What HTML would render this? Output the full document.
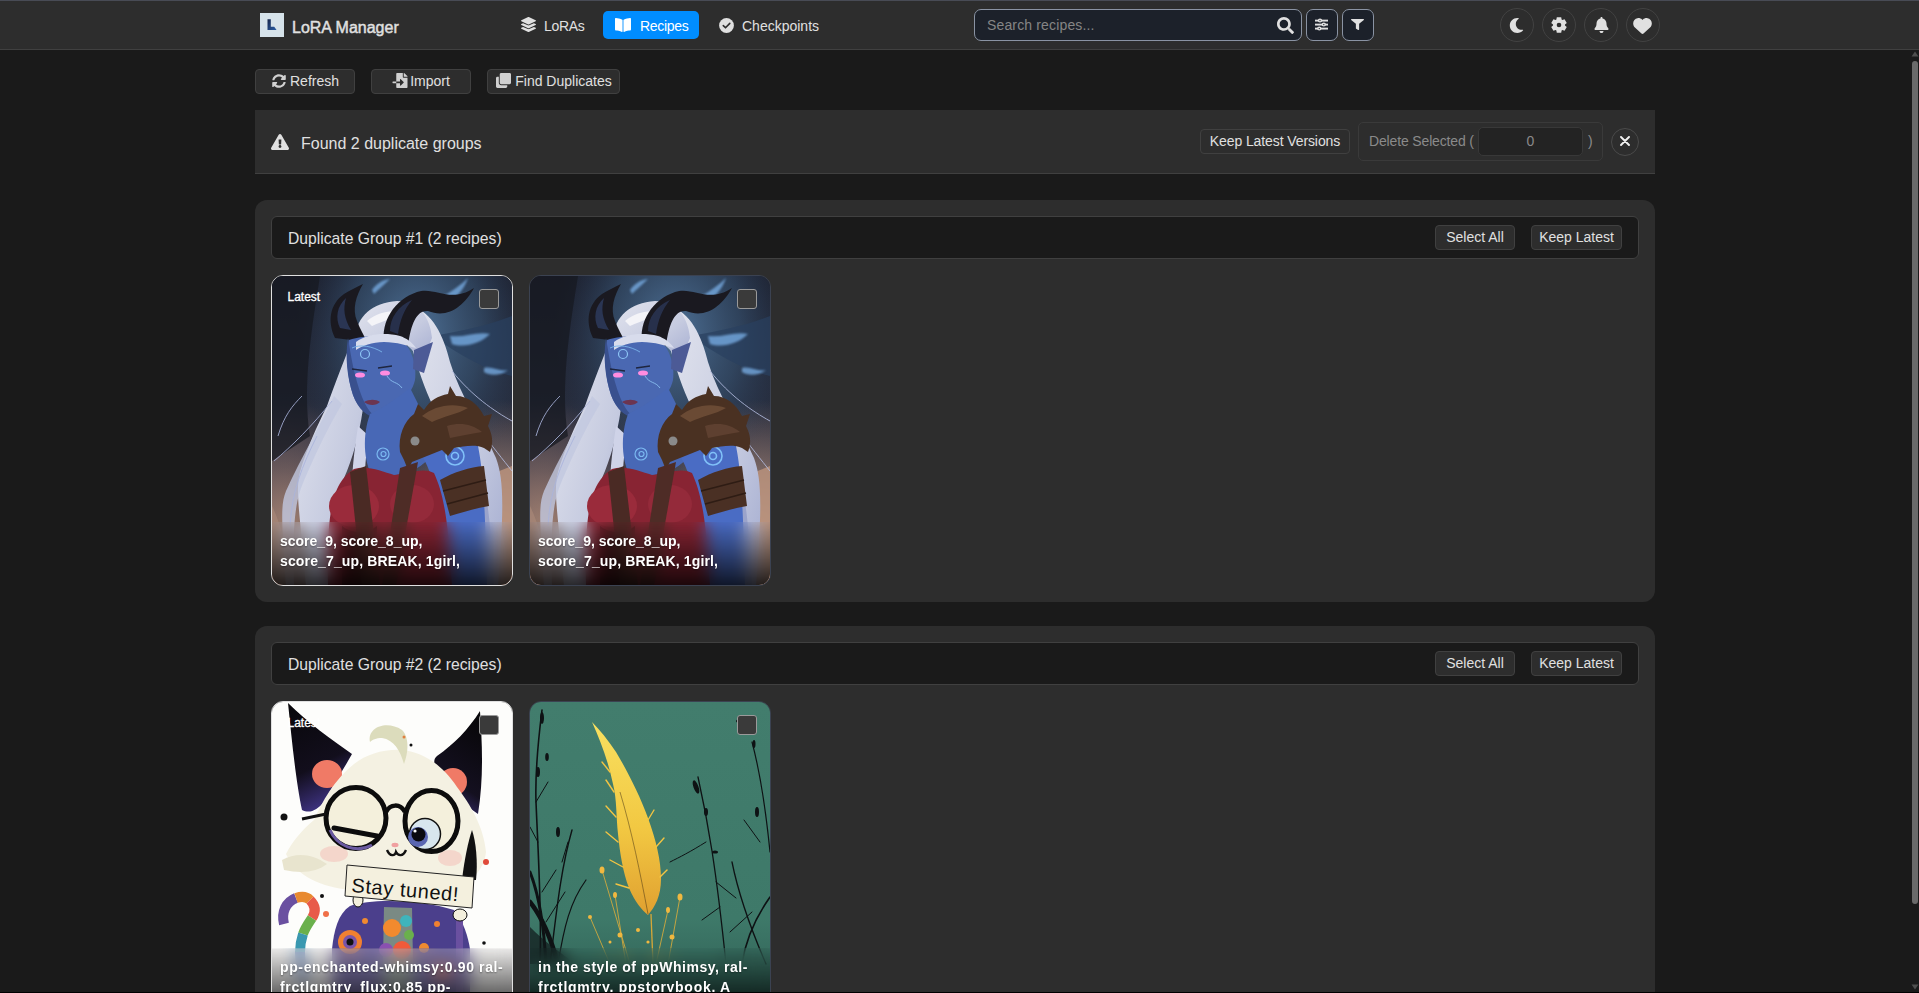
<!DOCTYPE html>
<html><head><meta charset="utf-8">
<style>
*{box-sizing:border-box;margin:0;padding:0}
html,body{width:1919px;height:993px;overflow:hidden;background:#1a1a1a;font-family:"Liberation Sans",sans-serif;color:#e0e0e0}
.abs{position:absolute}
#topline{left:0;top:0;width:1919px;height:1px;background:#484b55}
#header{left:0;top:0;width:1919px;height:50px;background:#2d2d2d;border-bottom:1px solid #404040}
.logo{left:260px;top:13px;width:24px;height:24px;background:#d6e2ea}
.brand{left:292px;top:19px;font-size:16px;font-weight:normal;-webkit-text-stroke:0.45px #e0e0e0;white-space:nowrap;color:#e0e0e0}
.nav{font-size:14px;white-space:nowrap;color:#e0e0e0}
.navbtn{left:603px;top:11px;width:96px;height:28px;border-radius:5px;background:oklch(68% 0.28 256)}
.search{left:974px;top:9px;width:328px;height:32px;border:1px solid #8a93a3;border-radius:7px;background:#1c212a}
.sbtn{top:9px;width:32px;height:32px;border:1px solid #8a93a3;border-radius:7px;background:#1c212a}
.circ{top:8px;width:34px;height:34px;border:1px solid #424242;border-radius:50%}
.btn{height:25px;padding-bottom:2px;border:1px solid #404040;border-radius:4px;background:#2d2d2d;font-size:14px;display:flex;align-items:center;justify-content:center;white-space:nowrap;color:#e0e0e0}
#banner{left:255px;top:110px;width:1400px;height:64px;background:#2d2d2d;border-bottom:1px solid #404040}
.group{left:255px;width:1400px;background:#2d2d2d;border-radius:12px}
.ghead{left:16px;top:16px;width:1368px;height:43px;background:#1a1a1a;border:1px solid #404040;border-radius:6px}
.gtitle{left:16px;top:13px;font-size:15.7px;white-space:nowrap}
.card{width:242px;height:311px;border-radius:12px;overflow:hidden;border:1px solid #3c4250}
.card svg{position:absolute;left:0;top:0}
.cb{left:207px;top:13px;width:20px;height:20px;border:1.5px solid #9a9a9a;border-radius:3px;background:#3a3a3a}
.foot{left:0;top:246px;width:240px;height:64px;padding:9px 8px 0 8px;font-size:14px;font-weight:bold;line-height:20px;color:#fff;overflow:hidden;backdrop-filter:blur(8px);-webkit-backdrop-filter:blur(8px);background:linear-gradient(rgba(0,0,0,0.02),rgba(0,0,0,0.8))}
.ftxt{white-space:nowrap;text-shadow:0 1px 2px rgba(0,0,0,0.4)}
.latest{left:15.5px;top:14px;font-size:12px;color:#fff;-webkit-text-stroke:0.3px #fff;white-space:nowrap}
#sbthumb{left:1912px;top:61px;width:6px;height:843px;background:#6a6a6a;border-radius:3px}
</style></head>
<body>
<div class="abs" id="header">
  <div class="abs" id="topline"></div>
  <div class="abs logo"><svg width="24" height="24" viewBox="0 0 24 24" style="position:absolute;left:0;top:0"><defs><linearGradient id="lg" x1="0" y1="0" x2="1" y2="1"><stop offset="0" stop-color="#16244a"/><stop offset="1" stop-color="#2b5fa8"/></linearGradient></defs><path d="M7.5 6.2 H10.8 V13.7 H14.2 L16.6 17 H7.5 Z" fill="url(#lg)"/></svg></div>
  <div class="abs brand">LoRA Manager</div>
  <svg class="abs" style="left:521px;top:17px" width="15" height="15" viewBox="0 0 512 512"><path fill="#e0e0e0" d="M12.41 148.02l232.94 105.67c6.8 3.09 14.49 3.09 21.29 0l232.94-105.67c16.55-7.51 16.55-32.52 0-40.03L266.65 2.31a25.607 25.607 0 0 0-21.29 0L12.41 107.98c-16.55 7.51-16.55 32.53 0 40.04zm487.18 88.28l-58.09-26.33-161.64 73.27c-7.56 3.43-15.59 5.17-23.86 5.17s-16.29-1.74-23.86-5.17L70.51 209.97l-58.1 26.33c-16.55 7.5-16.55 32.5 0 40l232.94 105.59c6.8 3.08 14.49 3.08 21.29 0L499.59 276.3c16.55-7.5 16.55-32.5 0-40zm0 127.8l-57.87-26.23-161.86 73.37c-7.56 3.43-15.59 5.17-23.86 5.17s-16.29-1.74-23.86-5.17L70.29 337.87 12.41 364.1c-16.55 7.5-16.55 32.5 0 40l232.94 105.59c6.8 3.08 14.49 3.08 21.29 0L499.59 404.1c16.55-7.5 16.55-32.5 0-40z"/></svg>
  <div class="abs nav" style="left:544px;top:18px;letter-spacing:-0.3px">LoRAs</div>
  <div class="abs navbtn"></div>
  <svg class="abs" style="left:615px;top:17.5px" width="16" height="14" viewBox="0 30 576 452" preserveAspectRatio="none"><path fill="#fff" d="M542.22 32.05c-54.8 3.11-163.72 14.43-230.96 55.59-4.64 2.84-7.27 7.89-7.27 13.17v363.87c0 11.55 12.63 18.85 23.28 13.49 69.18-34.82 169.23-44.32 218.7-46.92 16.89-.89 30.02-14.43 30.02-30.66V62.75c.01-17.71-15.35-31.74-33.77-30.7zM264.73 87.64C197.5 46.48 88.58 35.17 33.78 32.05 15.36 31.01 0 45.04 0 62.75V400.6c0 16.24 13.13 29.78 30.02 30.66 49.49 2.6 149.59 12.11 218.77 46.95 10.62 5.35 23.21-1.94 23.21-13.46V100.63c0-5.29-2.62-10.14-7.27-12.99z"/></svg>
  <div class="abs nav" style="left:640px;top:18px;color:#fff;letter-spacing:-0.3px">Recipes</div>
  <svg class="abs" style="left:719px;top:17.5px" width="15" height="15" viewBox="0 0 15 15"><circle cx="7.5" cy="7.5" r="7.4" fill="#e0e0e0"/><path d="M4.3 7.6 L6.5 9.8 L10.8 5.4" fill="none" stroke="#2d2d2d" stroke-width="1.6" stroke-linecap="round" stroke-linejoin="round"/></svg>
  <div class="abs nav" style="left:742px;top:18px">Checkpoints</div>
  <div class="abs search"></div>
  <div class="abs" style="left:987px;top:17px;font-size:14px;color:#858585;letter-spacing:0.15px">Search recipes...</div>
  <svg class="abs" style="left:1277px;top:17px" width="17" height="17" viewBox="0 0 512 512"><path d="M505 442.7L405.3 343c-4.5-4.5-10.6-7-17-7H372c27.6-35.3 44-79.7 44-128C416 93.1 322.9 0 208 0S0 93.1 0 208s93.1 208 208 208c48.3 0 92.7-16.4 128-44v16.3c0 6.4 2.5 12.5 7 17l99.7 99.7c9.4 9.4 24.6 9.4 33.9 0l28.3-28.3c9.4-9.4 9.4-24.6.1-34zM208 336c-70.7 0-128-57.2-128-128 0-70.7 57.2-128 128-128 70.7 0 128 57.2 128 128 0 70.7-57.2 128-128 128z" fill="#e0e0e0"/></svg>
  <div class="abs sbtn" style="left:1306px"></div>
  <svg class="abs" style="left:1315px;top:18px" width="13" height="13" viewBox="0 0 13 13"><g stroke="#e0e0e0" stroke-width="1.9"><line x1="0" y1="2.6" x2="13" y2="2.6"/><line x1="0" y1="6.6" x2="13" y2="6.6"/><line x1="0" y1="10.6" x2="13" y2="10.6"/></g><g fill="#e0e0e0"><ellipse cx="5" cy="2.6" rx="2.2" ry="2"/><ellipse cx="8.8" cy="6.6" rx="2.2" ry="2"/><ellipse cx="4.3" cy="10.6" rx="2.2" ry="2"/></g><g fill="#1c212a"><circle cx="5" cy="2.6" r="0.7"/><circle cx="8.8" cy="6.6" r="0.7"/><circle cx="4.3" cy="10.6" r="0.7"/></g></svg>
  <div class="abs sbtn" style="left:1342px"></div>
  <svg class="abs" style="left:1351px;top:19px" width="13" height="11" viewBox="0 0 512 512" preserveAspectRatio="none"><path fill="#e0e0e0" d="M487.976 0H24.028C2.71 0-8.047 25.866 7.058 40.971L192 225.941V432c0 7.831 3.821 15.17 10.237 19.662l80 55.98C298.02 518.69 320 507.493 320 487.98V225.941l184.947-184.97C520.021 25.896 509.338 0 487.976 0z"/></svg>
  <div class="abs circ" style="left:1500px"></div>
  <svg class="abs" style="left:1508.7px;top:17.5px" width="15" height="15" viewBox="0 0 512 512"><path d="M283.211 512c78.962 0 151.079-35.925 198.857-94.792 7.068-8.708-.639-21.43-11.562-19.35-124.203 23.654-238.262-71.576-238.262-196.954 0-72.222 38.662-138.635 101.498-174.394 9.686-5.512 7.25-20.197-3.756-22.23A258.156 258.156 0 0 0 283.211 0c-141.309 0-256 114.511-256 256 0 141.309 114.511 256 256 256z" fill="#e0e0e0"/></svg>
  <div class="abs circ" style="left:1542px"></div>
  <svg class="abs" style="left:1551px;top:17px" width="16" height="16" viewBox="0 0 16 16"><path fill-rule="evenodd" d="M13.98 8.44 L15.76 9.93 L13.55 13.76 L11.37 12.96 L10.61 13.40 L10.21 15.69 L5.79 15.69 L5.39 13.40 L4.63 12.96 L2.45 13.76 L0.24 9.93 L2.02 8.44 L2.02 7.56 L0.24 6.07 L2.45 2.24 L4.63 3.04 L5.39 2.60 L5.79 0.31 L10.21 0.31 L10.61 2.60 L11.37 3.04 L13.55 2.24 L15.76 6.07 L13.98 7.56Z M8 5.6 A2.4 2.4 0 1 0 8 10.4 A2.4 2.4 0 1 0 8 5.6Z" fill="#e0e0e0"/><circle cx="8" cy="8" r="5" fill="#e0e0e0"/><circle cx="8" cy="8" r="2.3" fill="#2d2d2d"/></svg>
  <div class="abs circ" style="left:1584px"></div>
  <svg class="abs" style="left:1593.5px;top:17px" width="15" height="16" viewBox="0 0 448 512"><path d="M224 0c-17.7 0-32 14.3-32 32V51.2C119 66 64 130.6 64 208v18.8c0 47-17.3 92.4-48.5 127.6l-7.4 8.3c-8.4 9.4-10.4 22.9-5.3 34.4S19.4 416 32 416H416c12.6 0 24-7.4 29.2-18.9s3.1-25-5.3-34.4l-7.4-8.3C401.3 319.2 384 273.9 384 226.8V208c0-77.4-55-142-128-156.8V32c0-17.7-14.3-32-32-32zm45.3 493.3c12-12 18.7-28.3 18.7-45.3H224 160c0 17 6.7 33.3 18.7 45.3s28.3 18.7 45.3 18.7s33.3-6.7 45.3-18.7z" fill="#e0e0e0"/></svg>
  <div class="abs circ" style="left:1626px"></div>
  <svg class="abs" style="left:1633px;top:17.5px" width="19" height="16" viewBox="0 0 512 440"><path d="M47.6 268.4L228.3 437.1c7.5 7 17.4 10.9 27.7 10.9s20.2-3.9 27.7-10.9L464.4 268.4c30.4-28.3 47.6-68 47.6-109.5v-5.8c0-69.9-50.5-129.5-119.4-141C347 4.5 300.6 19.4 268 52L256 64 244 52c-32.6-32.6-79-47.5-124.6-39.9C50.5 23.6 0 83.2 0 153.1v5.8c0 41.5 17.2 81.2 47.6 109.5z" fill="#e0e0e0" transform="translate(0,-8)"/></svg>
</div>

<div class="abs btn" style="left:255px;top:69px;width:100px;padding-left:2px"><svg width="14" height="14" viewBox="0 0 512 512" style="margin-right:4px;margin-left:-1px"><path fill="#d0d0d0" d="M370.72 133.28C339.458 104.008 298.888 87.962 255.848 88c-77.458.068-144.328 53.178-162.791 126.85-1.344 5.363-6.122 9.15-11.651 9.15H24.103c-7.498 0-13.194-6.807-11.807-14.176C33.933 94.924 134.813 8 256 8c66.448 0 126.791 26.136 171.315 68.685L463.03 40.97C478.149 25.851 504 36.559 504 57.941V192c0 13.255-10.745 24-24 24H345.941c-21.382 0-32.090-25.851-16.971-40.971l41.750-41.749zM32 296h134.059c21.382 0 32.090 25.851 16.971 40.971l-41.75 41.75c31.262 29.273 71.835 45.319 114.876 45.280 77.418-.07 144.315-53.144 162.787-126.849 1.344-5.363 6.122-9.15 11.651-9.15h57.304c7.498 0 13.194 6.807 11.807 14.176C478.067 417.076 377.187 504 256 504c-66.448 0-126.791-26.136-171.315-68.685L48.970 471.030C33.851 486.149 8 475.441 8 454.059V320c0-13.255 10.745-24 24-24z"/></svg>Refresh</div>
<div class="abs btn" style="left:371px;top:69px;width:100px;padding-left:0px"><svg width="16" height="15" viewBox="0 0 512 512" style="margin-right:2px"><path fill="#d0d0d0" d="M16 288c-8.8 0-16 7.2-16 16v32c0 8.8 7.2 16 16 16h112v-64zm489-183L407.1 7c-4.500-4.500-10.600-7-17-7H384v128h128v-6.1c0-6.3-2.5-12.4-7-16.9zm-153 31V0H152c-13.3 0-24 10.7-24 24v264h128v-65.2c0-14.3 17.3-21.4 27.4-11.3L379 308c6.6 6.7 6.6 17.4 0 24l-95.7 96.4c-10.1 10.1-27.4 3-27.4-11.3V352H128v136c0 13.3 10.7 24 24 24h336c13.3 0 24-10.7 24-24V160H376c-13.2 0-24-10.8-24-24z"/></svg>Import</div>
<div class="abs btn" style="left:487px;top:69px;width:133px;padding-left:1px"><svg width="15" height="15" viewBox="0 0 512 512" style="margin-right:4px"><path fill="#d0d0d0" d="M464 0c26.51 0 48 21.49 48 48v288c0 26.51-21.49 48-48 48H176c-26.51 0-48-21.49-48-48V48c0-26.51 21.49-48 48-48h288M176 416c-44.112 0-80-35.888-80-80V128H48c-26.51 0-48 21.49-48 48v288c0 26.51 21.490 48 48 48h288c26.51 0 48-21.49 48-48v-48H176z"/></svg>Find Duplicates</div>

<div class="abs" id="banner">
  <svg class="abs" style="left:15.5px;top:24px" width="18" height="16" viewBox="0 0 576 512"><path fill="#e0e0e0" d="M569.517 440.013C587.975 472.007 564.806 512 527.94 512H48.054c-36.937 0-59.999-40.055-41.577-71.987L246.423 23.985c18.467-32.009 64.72-31.951 83.154 0l239.94 416.028zM288 354c-25.405 0-46 20.595-46 46s20.595 46 46 46 46-20.595 46-46-20.595-46-46-46zm-43.673-165.346l7.418 136c.347 6.364 5.609 11.346 11.982 11.346h48.546c6.373 0 11.635-4.982 11.982-11.346l7.418-136c.375-6.874-5.098-12.654-11.982-12.654h-63.383c-6.884 0-12.356 5.780-11.981 12.654z"/></svg>
  <div class="abs" style="left:46px;top:25px;font-size:16px;white-space:nowrap">Found 2 duplicate groups</div>
  <div class="abs btn" style="left:945px;top:19px;width:150px;letter-spacing:-0.1px">Keep Latest Versions</div>
  <div class="abs" style="left:1103px;top:12px;width:245px;height:39px;border:1px solid #3a3a3a;border-radius:5px;opacity:1">
    <div class="abs" style="left:10px;top:10px;font-size:14px;color:#8a8a8a;white-space:nowrap;letter-spacing:-0.15px">Delete Selected (</div>
    <div class="abs" style="left:119px;top:4px;width:105px;height:29px;background:#232323;border:1px solid #383838;border-radius:5px;font-size:14px;color:#8a8a8a;text-align:center;line-height:26px">0</div>
    <div class="abs" style="left:229px;top:10px;font-size:14px;color:#8a8a8a">)</div>
  </div>
  <div class="abs" style="left:1356px;top:18px;width:28px;height:28px;border:1px solid #4a4a4a;border-radius:50%"></div>
  <svg class="abs" style="left:1365px;top:25.5px" width="10" height="10" viewBox="0 0 10 10"><path d="M1 1 L9 9 M9 1 L1 9" stroke="#f0f0f0" stroke-width="1.9" stroke-linecap="round"/></svg>
</div>

<div class="abs group" style="top:200px;height:402px">
  <div class="abs ghead"><div class="abs gtitle">Duplicate Group #1 (2 recipes)</div>
    <div class="abs btn" style="left:1163px;top:8px;width:80px">Select All</div>
    <div class="abs btn" style="left:1259px;top:8px;width:91px">Keep Latest</div>
  </div>
  <!--G1--><div class="abs card" style="left:16px;top:75px;border-color:#e0e0e0"><svg width="240" height="310" viewBox="0 0 240 310" style="position:absolute;left:0;top:0">
<defs>
<linearGradient id="adbg" x1="0" y1="0" x2="0" y2="1"><stop offset="0" stop-color="#1c1f2c"/><stop offset="0.4" stop-color="#262c3c"/><stop offset="0.62" stop-color="#43404c"/><stop offset="0.8" stop-color="#7a6464"/><stop offset="1" stop-color="#a8887a"/></linearGradient>
<radialGradient id="adglow" cx="0.6" cy="0.18" r="0.5"><stop offset="0" stop-color="#4f7298" stop-opacity="1"/><stop offset="0.55" stop-color="#36506e" stop-opacity="0.7"/><stop offset="1" stop-color="#2a3a55" stop-opacity="0"/></radialGradient>
<radialGradient id="adbr" cx="0.95" cy="0.85" r="0.45"><stop offset="0" stop-color="#c8a088" stop-opacity="0.95"/><stop offset="1" stop-color="#9a7a6c" stop-opacity="0"/></radialGradient>
<radialGradient id="adbl" cx="0.05" cy="0.8" r="0.4"><stop offset="0" stop-color="#a08070" stop-opacity="0.9"/><stop offset="1" stop-color="#7a6060" stop-opacity="0"/></radialGradient>
<linearGradient id="adhair" x1="0" y1="0" x2="1" y2="1"><stop offset="0" stop-color="#e2e4ee"/><stop offset="0.6" stop-color="#c6cbe0"/><stop offset="1" stop-color="#a4acd0"/></linearGradient>
<filter id="adsoft"><feGaussianBlur stdDeviation="1.2"/></filter>
</defs>
<rect width="240" height="310" fill="url(#adbg)"/>
<rect width="240" height="310" fill="url(#adglow)"/>
<rect width="240" height="310" fill="url(#adbr)"/>
<rect width="240" height="310" fill="url(#adbl)"/>
<path d="M0 0 H48 C40 50 30 110 38 160 L0 185 Z" fill="#171922" opacity="0.75"/>
<path d="M160 60 C190 80 215 95 240 100 V40 C215 50 190 55 160 60 Z" fill="#2a4060" opacity="0.7"/>
<g fill="#7ab0e8" opacity="0.75" filter="url(#adsoft)">
<path d="M172 20 C180 15 190 8 196 2 C192 14 184 22 176 26 Z"/>
<path d="M178 60 C192 62 205 55 218 58 C208 68 192 72 180 68 Z"/>
<path d="M100 14 C104 8 110 4 118 3 C112 9 106 14 102 18 Z"/>
<path d="M212 92 C220 90 228 96 236 94 C228 100 218 100 212 96 Z"/>
</g>
<path d="M215 200 C225 230 232 260 240 310 V190 Z" fill="#b8927c" opacity="0.85"/>
<path d="M0 230 C10 250 16 280 20 310 H0 Z" fill="#a88878" opacity="0.7"/>
<!-- left hair -->
<path d="M80 64 C70 90 62 110 55 130 C45 150 35 172 28 196 C23 216 28 236 34 310 L60 310 C60 235 66 215 75 195 C83 175 89 150 92 125 C93 100 89 80 85 66 Z" fill="url(#adhair)"/>
<path d="M62 120 C48 150 30 180 14 215 C8 230 10 245 14 310 L22 310 C20 240 24 222 34 200 C46 172 58 148 70 128 Z" fill="#c2c8e0" opacity="0.8"/>
<path d="M86 150 C80 190 76 222 84 310 L96 310 C90 222 92 188 97 160 Z" fill="#cfd3e8"/>
<g stroke="#aab4dc" stroke-width="1" fill="none" opacity="0.85"><path d="M60 125 C40 150 20 170 2 185"/><path d="M45 160 C30 190 20 215 18 250"/><path d="M30 120 C20 130 12 140 6 160"/></g>
<!-- right hair -->
<path d="M140 30 C160 36 172 60 178 86 C188 120 210 150 224 182 C232 204 232 232 226 310 L210 310 C212 228 204 198 190 172 L162 132 C152 112 146 92 140 72 Z" fill="url(#adhair)"/>
<path d="M196 160 C210 190 218 220 222 310 L214 310 C212 225 206 195 190 170 Z" fill="#8e98c4" opacity="0.7"/>
<g stroke="#b4bde0" stroke-width="1" fill="none" opacity="0.85"><path d="M180 95 C200 120 222 135 240 145"/><path d="M205 150 C220 170 232 185 240 195"/></g>
<!-- top hair -->
<path d="M83 62 C85 40 100 27 125 25 C146 25 158 40 160 62 L150 86 C140 72 130 63 118 61 C105 61 92 67 83 72 Z" fill="url(#adhair)"/>
<path d="M95 45 C105 36 120 33 135 36 C125 42 112 44 100 50 Z" fill="#f4f4f8"/>
<!-- horns -->
<path d="M63 62 C55 45 58 28 72 18 C78 14 85 11 91 8 C84 20 80 33 85 45 C88 53 92 59 95 66 Z" fill="#1a1920"/>
<path d="M112 68 C109 45 122 24 145 16 C163 10 178 28 202 12 C192 30 176 43 156 35 C145 34 139 47 136 70 Z" fill="#1a1920"/>
<path d="M68 52 C63 42 65 30 74 22 C71 33 72 42 79 54 Z" fill="#2e3c60" opacity="0.8"/>
<path d="M118 55 C118 42 126 30 140 24 C132 34 128 44 126 58 Z" fill="#2a3656" opacity="0.8"/>
<!-- face -->
<path d="M77 64 C90 60 110 58 126 62 C139 69 145 88 143 104 C139 121 124 134 104 140 C94 139 86 132 81 119 C75 101 74 82 77 64 Z" fill="#4a68b2"/>
<path d="M76 62 C79 80 82 100 90 121 C95 133 100 139 106 142 C95 141 86 133 81 119 C75 101 73 80 76 62 Z" fill="#39508e"/>
<path d="M142 74 L161 66 L152 97 L141 93 Z" fill="#4c5a96"/>
<path d="M84 66 C95 58 112 56 128 60 C134 62 140 66 144 72 C136 70 125 66 112 66 C100 66 90 70 84 74 Z" fill="#d8dcec"/>
<circle cx="93" cy="78" r="4.5" fill="none" stroke="#8cc4f4" stroke-width="1.2"/>
<path d="M80 72 C88 68 100 70 110 76" stroke="#7ab4ea" stroke-width="0.9" fill="none"/>
<ellipse cx="88" cy="99" rx="5" ry="2.6" fill="#ff8ce0"/>
<ellipse cx="113" cy="97" rx="5" ry="2.6" fill="#ff8ce0"/>
<path d="M80 93 L95 95 M106 92 L120 90" stroke="#1e2640" stroke-width="1.3"/>
<path d="M92 126 C97 123 104 123 108 126 C104 130 97 130 92 126 Z" fill="#6c3550"/>
<path d="M115 100 C120 108 125 105 130 112" stroke="#8ac0f0" stroke-width="0.9" fill="none"/>
<!-- neck/chest -->
<path d="M98 138 C112 132 125 122 138 112 C150 135 162 160 160 178 C150 195 125 202 100 200 C92 185 90 160 98 138 Z" fill="#4868b6"/>
<path d="M105 178 a6 6 0 1 0 12 0 a6 6 0 1 0 -12 0 M109 178 a2.5 2.5 0 1 0 5 0 a2.5 2.5 0 1 0 -5 0" fill="none" stroke="#7ab8f0" stroke-width="1.2"/>
<!-- right arm -->
<path d="M153 162 C172 155 195 158 206 170 C211 195 213 225 215 310 L176 310 C170 230 162 200 150 180 Z" fill="#4a6cc4"/>
<circle cx="183" cy="180" r="9" fill="none" stroke="#80c0f8" stroke-width="1.6"/>
<circle cx="183" cy="180" r="3.5" fill="none" stroke="#80c0f8" stroke-width="1.6"/>
<!-- fur -->
<path d="M128 176 C126 160 132 145 142 138 L146 128 L152 134 C158 124 166 120 176 118 L178 110 L184 120 C196 120 206 128 212 140 L220 138 L216 150 C220 158 222 166 218 176 L212 172 C204 168 192 170 182 172 L176 180 L170 174 C160 178 150 182 140 186 L136 194 L132 184 Z" fill="#4a3122"/>
<path d="M150 140 C162 130 180 126 196 132 C186 138 172 140 160 146 Z" fill="#6a4a34"/>
<path d="M175 150 C188 146 200 148 210 156 C198 158 188 160 178 162 Z" fill="#5e4030"/>
<circle cx="143" cy="165" r="4.5" fill="#8a8a8a"/>
<!-- armband -->
<path d="M168 204 C182 196 198 191 212 190 L217 230 C204 232 192 236 178 240 Z" fill="#4a3024"/>
<path d="M171 215 L214 204 M175 228 L216 217" stroke="#2e1c14" stroke-width="1.4"/>
<!-- red dress -->
<path d="M56 310 C54 230 62 206 82 193 C95 189 110 195 122 199 C138 197 152 191 162 197 C170 215 176 235 180 310 Z" fill="#882433"/>
<ellipse cx="82" cy="230" rx="25" ry="21" fill="#9a2b3b"/>
<ellipse cx="140" cy="228" rx="22" ry="19" fill="#942a3a"/>
<path d="M70 250 C80 258 95 258 105 250 L105 310 L70 310 Z" fill="#3e1418"/>
<path d="M78 196 L94 190 L108 310 L90 310 Z" fill="#4a2a24"/>
<path d="M128 192 L146 186 L124 310 L110 310 Z" fill="#4e2c26"/>

</svg><div class="abs latest">Latest</div><div class="abs cb"></div><div class="abs foot"><div class="ftxt"><span style="letter-spacing:0px">score_9, score_8_up,</span><br><span style="letter-spacing:0.14px">score_7_up, BREAK, 1girl,</span></div></div></div>
  <div class="abs card" style="left:274px;top:75px;border-color:#3b4251"><svg width="240" height="310" viewBox="0 0 240 310" style="position:absolute;left:0;top:0">
<defs>
<linearGradient id="bdbg" x1="0" y1="0" x2="0" y2="1"><stop offset="0" stop-color="#1c1f2c"/><stop offset="0.4" stop-color="#262c3c"/><stop offset="0.62" stop-color="#43404c"/><stop offset="0.8" stop-color="#7a6464"/><stop offset="1" stop-color="#a8887a"/></linearGradient>
<radialGradient id="bdglow" cx="0.6" cy="0.18" r="0.5"><stop offset="0" stop-color="#4f7298" stop-opacity="1"/><stop offset="0.55" stop-color="#36506e" stop-opacity="0.7"/><stop offset="1" stop-color="#2a3a55" stop-opacity="0"/></radialGradient>
<radialGradient id="bdbr" cx="0.95" cy="0.85" r="0.45"><stop offset="0" stop-color="#c8a088" stop-opacity="0.95"/><stop offset="1" stop-color="#9a7a6c" stop-opacity="0"/></radialGradient>
<radialGradient id="bdbl" cx="0.05" cy="0.8" r="0.4"><stop offset="0" stop-color="#a08070" stop-opacity="0.9"/><stop offset="1" stop-color="#7a6060" stop-opacity="0"/></radialGradient>
<linearGradient id="bdhair" x1="0" y1="0" x2="1" y2="1"><stop offset="0" stop-color="#e2e4ee"/><stop offset="0.6" stop-color="#c6cbe0"/><stop offset="1" stop-color="#a4acd0"/></linearGradient>
<filter id="bdsoft"><feGaussianBlur stdDeviation="1.2"/></filter>
</defs>
<rect width="240" height="310" fill="url(#bdbg)"/>
<rect width="240" height="310" fill="url(#bdglow)"/>
<rect width="240" height="310" fill="url(#bdbr)"/>
<rect width="240" height="310" fill="url(#bdbl)"/>
<path d="M0 0 H48 C40 50 30 110 38 160 L0 185 Z" fill="#171922" opacity="0.75"/>
<path d="M160 60 C190 80 215 95 240 100 V40 C215 50 190 55 160 60 Z" fill="#2a4060" opacity="0.7"/>
<g fill="#7ab0e8" opacity="0.75" filter="url(#bdsoft)">
<path d="M172 20 C180 15 190 8 196 2 C192 14 184 22 176 26 Z"/>
<path d="M178 60 C192 62 205 55 218 58 C208 68 192 72 180 68 Z"/>
<path d="M100 14 C104 8 110 4 118 3 C112 9 106 14 102 18 Z"/>
<path d="M212 92 C220 90 228 96 236 94 C228 100 218 100 212 96 Z"/>
</g>
<path d="M215 200 C225 230 232 260 240 310 V190 Z" fill="#b8927c" opacity="0.85"/>
<path d="M0 230 C10 250 16 280 20 310 H0 Z" fill="#a88878" opacity="0.7"/>
<!-- left hair -->
<path d="M80 64 C70 90 62 110 55 130 C45 150 35 172 28 196 C23 216 28 236 34 310 L60 310 C60 235 66 215 75 195 C83 175 89 150 92 125 C93 100 89 80 85 66 Z" fill="url(#bdhair)"/>
<path d="M62 120 C48 150 30 180 14 215 C8 230 10 245 14 310 L22 310 C20 240 24 222 34 200 C46 172 58 148 70 128 Z" fill="#c2c8e0" opacity="0.8"/>
<path d="M86 150 C80 190 76 222 84 310 L96 310 C90 222 92 188 97 160 Z" fill="#cfd3e8"/>
<g stroke="#aab4dc" stroke-width="1" fill="none" opacity="0.85"><path d="M60 125 C40 150 20 170 2 185"/><path d="M45 160 C30 190 20 215 18 250"/><path d="M30 120 C20 130 12 140 6 160"/></g>
<!-- right hair -->
<path d="M140 30 C160 36 172 60 178 86 C188 120 210 150 224 182 C232 204 232 232 226 310 L210 310 C212 228 204 198 190 172 L162 132 C152 112 146 92 140 72 Z" fill="url(#bdhair)"/>
<path d="M196 160 C210 190 218 220 222 310 L214 310 C212 225 206 195 190 170 Z" fill="#8e98c4" opacity="0.7"/>
<g stroke="#b4bde0" stroke-width="1" fill="none" opacity="0.85"><path d="M180 95 C200 120 222 135 240 145"/><path d="M205 150 C220 170 232 185 240 195"/></g>
<!-- top hair -->
<path d="M83 62 C85 40 100 27 125 25 C146 25 158 40 160 62 L150 86 C140 72 130 63 118 61 C105 61 92 67 83 72 Z" fill="url(#bdhair)"/>
<path d="M95 45 C105 36 120 33 135 36 C125 42 112 44 100 50 Z" fill="#f4f4f8"/>
<!-- horns -->
<path d="M63 62 C55 45 58 28 72 18 C78 14 85 11 91 8 C84 20 80 33 85 45 C88 53 92 59 95 66 Z" fill="#1a1920"/>
<path d="M112 68 C109 45 122 24 145 16 C163 10 178 28 202 12 C192 30 176 43 156 35 C145 34 139 47 136 70 Z" fill="#1a1920"/>
<path d="M68 52 C63 42 65 30 74 22 C71 33 72 42 79 54 Z" fill="#2e3c60" opacity="0.8"/>
<path d="M118 55 C118 42 126 30 140 24 C132 34 128 44 126 58 Z" fill="#2a3656" opacity="0.8"/>
<!-- face -->
<path d="M77 64 C90 60 110 58 126 62 C139 69 145 88 143 104 C139 121 124 134 104 140 C94 139 86 132 81 119 C75 101 74 82 77 64 Z" fill="#4a68b2"/>
<path d="M76 62 C79 80 82 100 90 121 C95 133 100 139 106 142 C95 141 86 133 81 119 C75 101 73 80 76 62 Z" fill="#39508e"/>
<path d="M142 74 L161 66 L152 97 L141 93 Z" fill="#4c5a96"/>
<path d="M84 66 C95 58 112 56 128 60 C134 62 140 66 144 72 C136 70 125 66 112 66 C100 66 90 70 84 74 Z" fill="#d8dcec"/>
<circle cx="93" cy="78" r="4.5" fill="none" stroke="#8cc4f4" stroke-width="1.2"/>
<path d="M80 72 C88 68 100 70 110 76" stroke="#7ab4ea" stroke-width="0.9" fill="none"/>
<ellipse cx="88" cy="99" rx="5" ry="2.6" fill="#ff8ce0"/>
<ellipse cx="113" cy="97" rx="5" ry="2.6" fill="#ff8ce0"/>
<path d="M80 93 L95 95 M106 92 L120 90" stroke="#1e2640" stroke-width="1.3"/>
<path d="M92 126 C97 123 104 123 108 126 C104 130 97 130 92 126 Z" fill="#6c3550"/>
<path d="M115 100 C120 108 125 105 130 112" stroke="#8ac0f0" stroke-width="0.9" fill="none"/>
<!-- neck/chest -->
<path d="M98 138 C112 132 125 122 138 112 C150 135 162 160 160 178 C150 195 125 202 100 200 C92 185 90 160 98 138 Z" fill="#4868b6"/>
<path d="M105 178 a6 6 0 1 0 12 0 a6 6 0 1 0 -12 0 M109 178 a2.5 2.5 0 1 0 5 0 a2.5 2.5 0 1 0 -5 0" fill="none" stroke="#7ab8f0" stroke-width="1.2"/>
<!-- right arm -->
<path d="M153 162 C172 155 195 158 206 170 C211 195 213 225 215 310 L176 310 C170 230 162 200 150 180 Z" fill="#4a6cc4"/>
<circle cx="183" cy="180" r="9" fill="none" stroke="#80c0f8" stroke-width="1.6"/>
<circle cx="183" cy="180" r="3.5" fill="none" stroke="#80c0f8" stroke-width="1.6"/>
<!-- fur -->
<path d="M128 176 C126 160 132 145 142 138 L146 128 L152 134 C158 124 166 120 176 118 L178 110 L184 120 C196 120 206 128 212 140 L220 138 L216 150 C220 158 222 166 218 176 L212 172 C204 168 192 170 182 172 L176 180 L170 174 C160 178 150 182 140 186 L136 194 L132 184 Z" fill="#4a3122"/>
<path d="M150 140 C162 130 180 126 196 132 C186 138 172 140 160 146 Z" fill="#6a4a34"/>
<path d="M175 150 C188 146 200 148 210 156 C198 158 188 160 178 162 Z" fill="#5e4030"/>
<circle cx="143" cy="165" r="4.5" fill="#8a8a8a"/>
<!-- armband -->
<path d="M168 204 C182 196 198 191 212 190 L217 230 C204 232 192 236 178 240 Z" fill="#4a3024"/>
<path d="M171 215 L214 204 M175 228 L216 217" stroke="#2e1c14" stroke-width="1.4"/>
<!-- red dress -->
<path d="M56 310 C54 230 62 206 82 193 C95 189 110 195 122 199 C138 197 152 191 162 197 C170 215 176 235 180 310 Z" fill="#882433"/>
<ellipse cx="82" cy="230" rx="25" ry="21" fill="#9a2b3b"/>
<ellipse cx="140" cy="228" rx="22" ry="19" fill="#942a3a"/>
<path d="M70 250 C80 258 95 258 105 250 L105 310 L70 310 Z" fill="#3e1418"/>
<path d="M78 196 L94 190 L108 310 L90 310 Z" fill="#4a2a24"/>
<path d="M128 192 L146 186 L124 310 L110 310 Z" fill="#4e2c26"/>

</svg><div class="abs cb"></div><div class="abs foot"><div class="ftxt"><span style="letter-spacing:0px">score_9, score_8_up,</span><br><span style="letter-spacing:0.14px">score_7_up, BREAK, 1girl,</span></div></div></div><!--/G1-->
</div>

<div class="abs group" style="top:626px;height:420px">
  <div class="abs ghead"><div class="abs gtitle">Duplicate Group #2 (2 recipes)</div>
    <div class="abs btn" style="left:1163px;top:8px;width:80px">Select All</div>
    <div class="abs btn" style="left:1259px;top:8px;width:91px">Keep Latest</div>
  </div>
  <!--G2--><div class="abs card" style="left:16px;top:75px;border-color:#e0e0e0"><svg width="240" height="310" viewBox="0 0 240 310" style="position:absolute;left:0;top:0">
<defs>
<linearGradient id="ccear" x1="0" y1="0" x2="0.3" y2="1"><stop offset="0" stop-color="#08070a"/><stop offset="0.65" stop-color="#120e1c"/><stop offset="1" stop-color="#3a2f78"/></linearGradient>
<linearGradient id="ccear2" x1="0.5" y1="0" x2="0.2" y2="1"><stop offset="0" stop-color="#08070a"/><stop offset="0.65" stop-color="#141020"/><stop offset="1" stop-color="#3e3280"/></linearGradient>
</defs>
<rect width="240" height="310" fill="#fdfdfb"/>
<path d="M16 1 C35 20 60 38 80 52 C70 70 60 85 52 100 C45 108 38 112 30 108 C24 80 20 40 16 1 Z" fill="url(#ccear)"/>
<path d="M208 9 C210 40 212 75 206 112 C195 105 182 92 170 75 C162 65 160 58 165 54 C182 42 196 28 208 9 Z" fill="url(#ccear2)"/>
<ellipse cx="55" cy="72" rx="15" ry="14" fill="#f07a66"/>
<ellipse cx="181" cy="80" rx="14" ry="14" fill="#f07a66"/>
<path d="M14 152 C20 140 30 128 42 118 C50 100 62 78 82 62 C95 52 112 47 130 48 C150 50 170 62 185 85 C198 102 212 125 214 150 C212 168 200 180 180 186 C150 190 110 192 78 188 C50 185 25 175 14 152 Z" fill="#f4f1e2"/>
<path d="M10 158 C25 150 40 152 55 162 C45 170 30 172 12 168 Z" fill="#e8e4ce"/>
<path d="M98 40 C95 25 115 18 130 28 C138 36 136 52 132 62 C128 48 122 38 110 36 C104 36 100 38 98 40 Z" fill="#dcdcbc"/>
<ellipse cx="62" cy="152" rx="14" ry="8" fill="#f4c4bc" opacity="0.6"/>
<ellipse cx="178" cy="156" rx="12" ry="8" fill="#f4c4bc" opacity="0.6"/>
<ellipse cx="84" cy="116" rx="30" ry="30.5" fill="#f4f0dc" stroke="#0c0c0c" stroke-width="5"/>
<path d="M58 128 A30 30 0 0 0 100 143" stroke="#6a5aa0" stroke-width="3" fill="none"/>
<ellipse cx="159.5" cy="119" rx="26.5" ry="30.5" fill="#f4f0dc" stroke="#0c0c0c" stroke-width="5"/>
<path d="M114 110 C118 102 128 101 133 110" stroke="#0c0c0c" stroke-width="4.5" fill="none"/>
<path d="M54 112 L30 117" stroke="#111" stroke-width="3"/>
<circle cx="12" cy="115" r="3.5" fill="#111"/>
<path d="M62 126 L105 134" stroke="#0c0c0c" stroke-width="5" stroke-linecap="round"/>
<circle cx="153" cy="132" r="15.5" fill="#d8e6ee" stroke="#111" stroke-width="1.5"/>
<circle cx="146" cy="135" r="10" fill="#5a66b2"/>
<circle cx="146.5" cy="132.5" r="7" fill="#0a0a10"/>
<circle cx="143" cy="129" r="1.6" fill="#fff"/>
<ellipse cx="123" cy="143" rx="3.5" ry="2.2" fill="#f0a0a0"/>
<path d="M115 148 C118 155 123 154 124 150 C126 154 131 155 134 148" stroke="#111" stroke-width="2.4" fill="none"/>
<path d="M190 178 C192 160 196 140 200 128 C204 140 206 160 204 178 Z" fill="#111"/>
<path d="M60 247 C62 228 66 212 78 204 C100 196 150 198 182 208 C192 220 196 235 198 247 L198 310 L60 310 Z" fill="#4b3f8c"/>
<path d="M112 205 L140 206 L142 310 L110 310 Z" fill="#7a8a84"/>
<circle cx="78" cy="240" r="12" fill="#f08030"/>
<circle cx="78" cy="240" r="7" fill="#7a55a8"/>
<circle cx="78" cy="240" r="3.5" fill="#111"/>
<circle cx="120" cy="226" r="9" fill="#f28a2e"/>
<circle cx="134" cy="219" r="6" fill="#3fb4bc"/>
<circle cx="137" cy="233" r="5" fill="#6ab04c"/>
<circle cx="130" cy="248" r="9" fill="#f05a3a"/>
<circle cx="114" cy="248" r="7" fill="#8a50b0"/>
<circle cx="152" cy="246" r="5" fill="#f08a30"/>
<circle cx="93" cy="219" r="3" fill="#f08a30"/>
<circle cx="165" cy="222" r="3" fill="#f08030"/>
<circle cx="170" cy="270" r="8" fill="#e8603a"/>
<path d="M184 212 L191 212 L191 310 L184 310 Z" fill="#6a50a0"/>
<ellipse cx="188" cy="213" rx="7" ry="6" fill="#f3efdc" stroke="#111" stroke-width="1"/>
<ellipse cx="86" cy="198" rx="5" ry="7" fill="#f3efdc" stroke="#111" stroke-width="1"/>
<polygon points="75,163 202,175 200,206 73,194" fill="#f4f0de" stroke="#222" stroke-width="1"/>
<text x="79" y="190" transform="rotate(5 79 190)" font-family="Liberation Sans" font-size="20" letter-spacing="0.6" fill="#111">Stay tuned!</text>
<g fill="none" stroke-width="10">
<path d="M12 222 C9 210 14 200 24 196" stroke="#6a50a0"/>
<path d="M24 196 C30 194 35 195 38 198" stroke="#e88a30"/>
<path d="M38 198 C44 204 44 210 40 216" stroke="#e85a4a"/>
<path d="M40 216 C36 222 33 226 31 232" stroke="#6ab04c"/>
<path d="M31 232 C29 238 28 244 28 250" stroke="#3a98b0"/>
<path d="M28 250 C28 260 30 270 32 280" stroke="#4a70b8"/>
</g>
<circle cx="50" cy="194" r="2" fill="#111"/><circle cx="54" cy="212" r="3" fill="#f07048"/><circle cx="214" cy="160" r="3" fill="#e04a3a"/><circle cx="212" cy="241" r="1.8" fill="#111"/><circle cx="139" cy="43" r="1.5" fill="#111"/><circle cx="132" cy="35" r="1.5" fill="#e08040"/>
<path d="M0 247 H240 V310 H0 Z" fill="#d8d4d8" opacity="0.35"/>
</svg><div class="abs latest">Latest</div><div class="abs cb"></div><div class="abs foot"><div class="ftxt"><span style="letter-spacing:0.62px">pp-enchanted-whimsy:0.90 ral-</span><br><span style="letter-spacing:0.65px">frctlgmtry_flux:0.85 pp-</span></div></div></div>
  <div class="abs card" style="left:274px;top:75px;border-color:#3b4251"><svg width="240" height="310" viewBox="0 0 240 310" style="position:absolute;left:0;top:0">
<defs>
<linearGradient id="dfbg" x1="0" y1="0" x2="0" y2="1"><stop offset="0" stop-color="#427d6d"/><stop offset="0.7" stop-color="#3e7969"/><stop offset="1" stop-color="#2c5a50"/></linearGradient>
<linearGradient id="dfyel" x1="0" y1="0" x2="0" y2="1"><stop offset="0" stop-color="#f8e060"/><stop offset="0.55" stop-color="#f2c842"/><stop offset="1" stop-color="#e0a030"/></linearGradient>
</defs>
<rect width="240" height="310" fill="url(#dfbg)"/>
<path d="M62 20 C70 38 78 58 83 82 C87 98 86 115 88 132 C90 152 93 170 99 186 C105 200 112 208 118 213 C125 205 131 194 131 177 C131 158 126 138 118 116 C110 94 98 70 86 50 C78 38 70 28 62 20 Z" fill="url(#dfyel)"/>
<g stroke="#f2c442" stroke-width="1.4" stroke-linecap="round"><path d="M84 90 L76 78"/><path d="M86 115 L76 104"/><path d="M88 140 L76 130"/><path d="M93 165 L80 158"/><path d="M99 186 L86 182"/><path d="M118 118 L124 108"/><path d="M126 145 L134 136"/><path d="M130 175 L137 168"/><path d="M80 70 L72 60"/></g>
<path d="M90 90 C102 130 110 170 118 212" stroke="#3a2a10" stroke-width="0.8" fill="none" opacity="0.6"/>
<path d="M121 212 L123 262" stroke="#d8a838" stroke-width="1.3"/>
<g stroke="#e4b038" stroke-width="0.8" fill="none"><path d="M72 168 L100 262"/><path d="M85 193 L96 262"/><path d="M150 195 L138 262"/><path d="M138 208 L126 262"/><path d="M60 215 L80 262"/></g>
<g fill="#f0b840"><ellipse cx="72" cy="168" rx="2.5" ry="3.5"/><ellipse cx="85" cy="193" rx="2" ry="3"/><ellipse cx="150" cy="195" rx="2.5" ry="3.5"/><ellipse cx="138" cy="208" rx="2" ry="3"/><circle cx="60" cy="215" r="2"/><circle cx="90" cy="233" r="2.5"/><circle cx="108" cy="228" r="2"/><circle cx="142" cy="235" r="2.5"/><circle cx="118" cy="240" r="1.6"/><circle cx="80" cy="240" r="1.5"/></g>
<g stroke="#0e1214" fill="none" stroke-linecap="round">
<path d="M10 262 C12 210 8 150 6 100 C5 70 8 40 12 8" stroke-width="1.6"/>
<path d="M20 262 C26 215 30 170 42 128" stroke-width="1.4"/>
<path d="M28 262 C34 225 40 200 56 178" stroke-width="1.2"/>
<path d="M0 200 C12 215 22 240 28 262" stroke-width="4.5"/>
<path d="M0 170 C8 190 14 225 16 262" stroke-width="3"/>
<path d="M6 100 L18 80 M8 140 L0 125 M12 190 L26 168 M32 160 L38 140 M16 220 L35 190" stroke-width="1"/>
<path d="M168 75 C178 120 186 165 196 262" stroke-width="1.3"/>
<path d="M176 140 C160 150 150 155 140 160" stroke-width="1"/>
<path d="M222 40 C230 70 236 110 240 150" stroke-width="1.2"/>
<path d="M236 262 C220 225 208 190 202 160" stroke-width="1.3"/>
<path d="M240 195 C226 215 216 235 212 262" stroke-width="1.6"/>
<path d="M186 180 L206 196 M190 205 L172 218 M214 118 L230 140 M200 230 L222 210" stroke-width="1"/>
</g>
<g fill="#0e1214"><ellipse cx="12" cy="16" rx="2" ry="6"/><ellipse cx="17" cy="55" rx="1.8" ry="4"/><ellipse cx="8" cy="70" rx="2" ry="5"/><ellipse cx="166" cy="85" rx="2.5" ry="7" transform="rotate(-20 166 85)"/><ellipse cx="176" cy="110" rx="2" ry="4"/><ellipse cx="227" cy="110" rx="2" ry="5"/><ellipse cx="224" cy="42" rx="1.5" ry="4"/><ellipse cx="28" cy="130" rx="2" ry="5"/><ellipse cx="208" cy="19" rx="2" ry="1.5"/><ellipse cx="185" cy="150" rx="3" ry="1.6"/></g>
<path d="M0 225 C15 240 30 250 45 262 L0 262 Z" fill="#10181a" opacity="0.7"/>
</svg><div class="abs cb"></div><div class="abs foot"><div class="ftxt"><span style="letter-spacing:0.55px">in the style of ppWhimsy, ral-</span><br><span style="letter-spacing:0.72px">frctlgmtry, ppstorybook. A</span></div></div></div><!--/G2-->
</div>

<div class="abs" style="left:0;top:992px;width:1919px;height:1px;background:#000"></div>
<div class="abs" id="sbthumb"></div>
<svg class="abs" style="left:1911px;top:51px" width="8" height="6" viewBox="0 0 8 6"><path d="M4 0.5 L7.5 5.5 H0.5 Z" fill="#4e4e4e"/></svg>
<svg class="abs" style="left:1911px;top:984px" width="8" height="6" viewBox="0 0 8 6"><path d="M0.5 0.5 H7.5 L4 5.5 Z" fill="#4e4e4e"/></svg>
</body></html>
